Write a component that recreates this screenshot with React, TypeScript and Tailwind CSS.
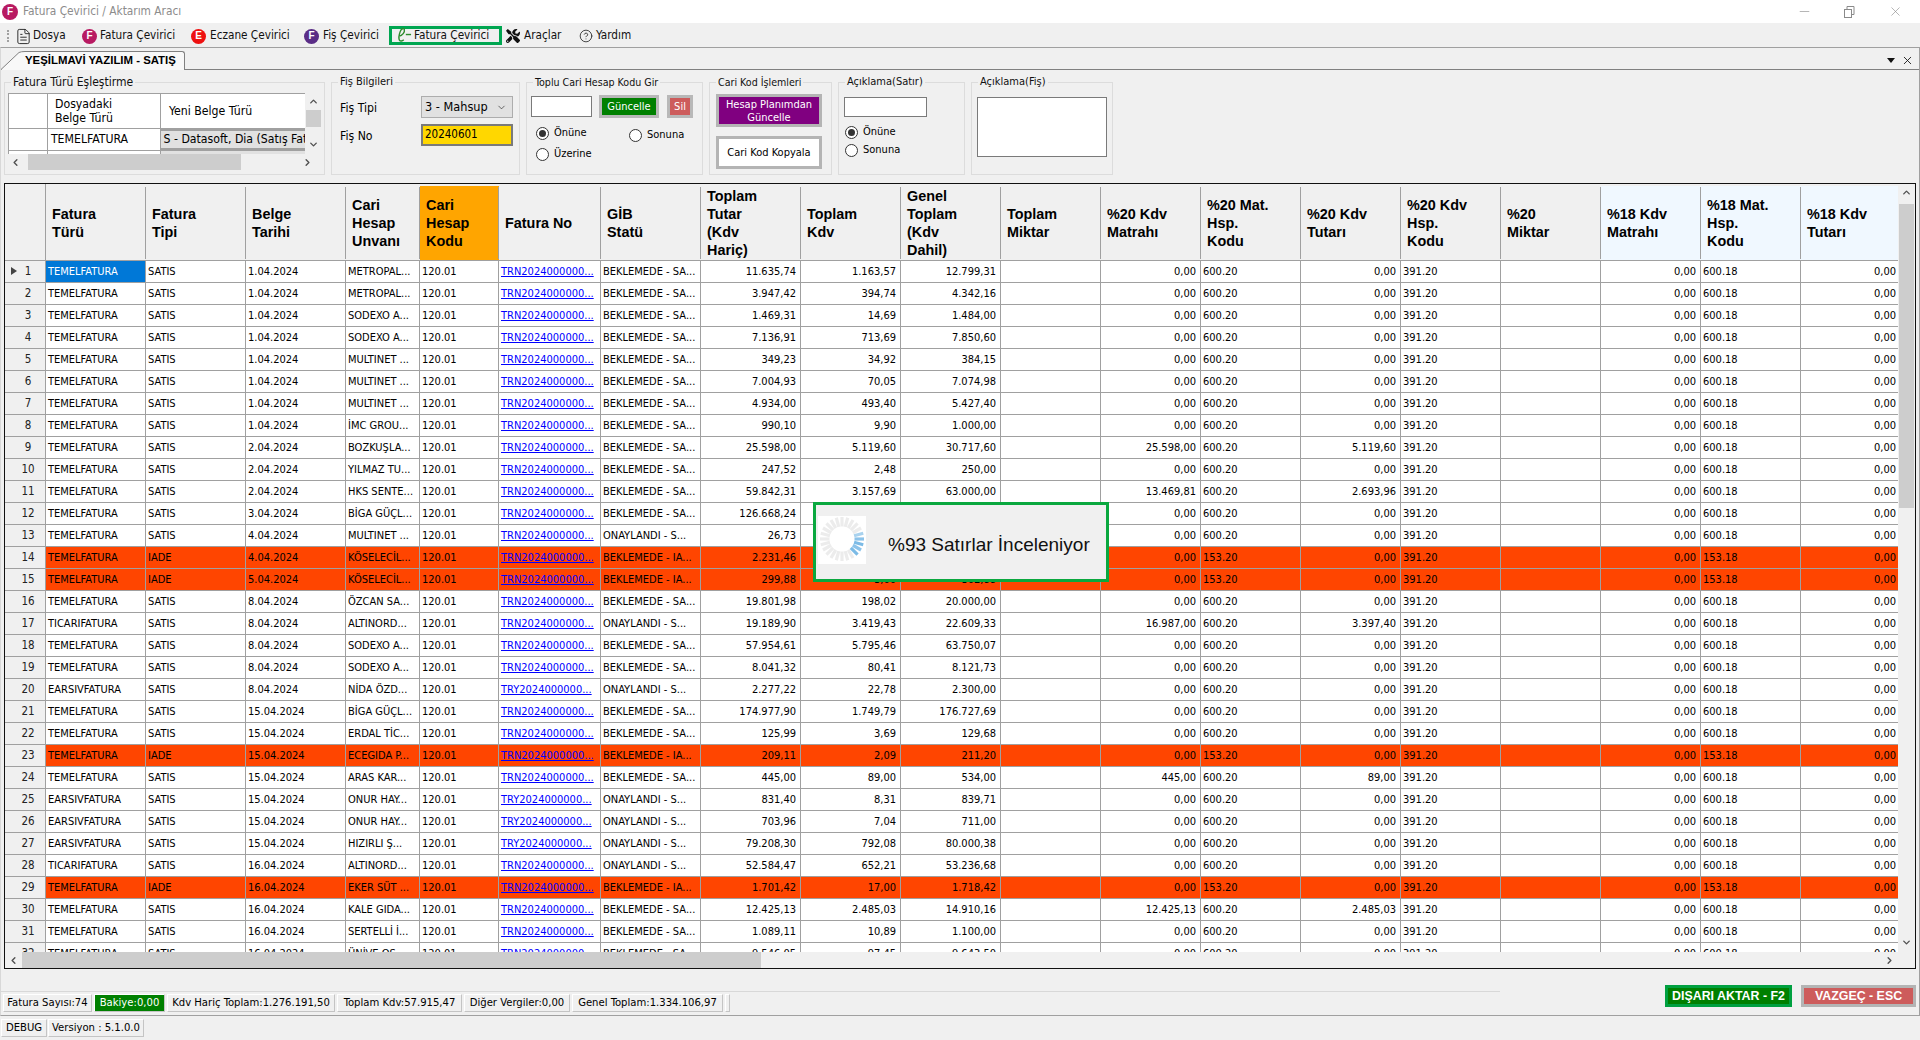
import React from "react";
import { ChevronDown, ChevronLeft, ChevronRight, ChevronUp, CircleHelp, FileText, Minus, X } from "lucide-react";
import { FaTools } from "react-icons/fa";

type Row = {
  type: string;
  tip: string;
  date: string;
  name: string;
  no: string;
  status: string;
  tutar: string;
  kdv: string;
  genel: string;
  matrah?: string;
  kdvTutar?: string;
};

const T = "TEMELFATURA";
const E = "EARSIVFATURA";
const C = "TICARIFATURA";
const TRN = "TRN2024000000...";
const TRY = "TRY2024000000...";
const BS = "BEKLEMEDE - SA...";
const BI = "BEKLEMEDE - IA...";
const ON = "ONAYLANDI - S...";

const rows: Row[] = [
  { type: T, tip: "SATIS", date: "1.04.2024", name: "METROPAL...", no: TRN, status: BS, tutar: "11.635,74", kdv: "1.163,57", genel: "12.799,31" },
  { type: T, tip: "SATIS", date: "1.04.2024", name: "METROPAL...", no: TRN, status: BS, tutar: "3.947,42", kdv: "394,74", genel: "4.342,16" },
  { type: T, tip: "SATIS", date: "1.04.2024", name: "SODEXO A...", no: TRN, status: BS, tutar: "1.469,31", kdv: "14,69", genel: "1.484,00" },
  { type: T, tip: "SATIS", date: "1.04.2024", name: "SODEXO A...", no: TRN, status: BS, tutar: "7.136,91", kdv: "713,69", genel: "7.850,60" },
  { type: T, tip: "SATIS", date: "1.04.2024", name: "MULTINET ...", no: TRN, status: BS, tutar: "349,23", kdv: "34,92", genel: "384,15" },
  { type: T, tip: "SATIS", date: "1.04.2024", name: "MULTINET ...", no: TRN, status: BS, tutar: "7.004,93", kdv: "70,05", genel: "7.074,98" },
  { type: T, tip: "SATIS", date: "1.04.2024", name: "MULTINET ...", no: TRN, status: BS, tutar: "4.934,00", kdv: "493,40", genel: "5.427,40" },
  { type: T, tip: "SATIS", date: "1.04.2024", name: "İMC GROU...", no: TRN, status: BS, tutar: "990,10", kdv: "9,90", genel: "1.000,00" },
  { type: T, tip: "SATIS", date: "2.04.2024", name: "BOZKUŞLA...", no: TRN, status: BS, tutar: "25.598,00", kdv: "5.119,60", genel: "30.717,60", matrah: "25.598,00", kdvTutar: "5.119,60" },
  { type: T, tip: "SATIS", date: "2.04.2024", name: "YILMAZ TU...", no: TRN, status: BS, tutar: "247,52", kdv: "2,48", genel: "250,00" },
  { type: T, tip: "SATIS", date: "2.04.2024", name: "HKS SENTE...", no: TRN, status: BS, tutar: "59.842,31", kdv: "3.157,69", genel: "63.000,00", matrah: "13.469,81", kdvTutar: "2.693,96" },
  { type: T, tip: "SATIS", date: "3.04.2024", name: "BİGA GÜÇL...", no: TRN, status: BS, tutar: "126.668,24", kdv: "1.266,68", genel: "127.934,92" },
  { type: T, tip: "SATIS", date: "4.04.2024", name: "MULTINET ...", no: TRN, status: ON, tutar: "26,73", kdv: "0,27", genel: "27,00" },
  { type: T, tip: "IADE", date: "4.04.2024", name: "KÖSELECİL...", no: TRN, status: BI, tutar: "2.231,46", kdv: "22,31", genel: "2.253,77" },
  { type: T, tip: "IADE", date: "5.04.2024", name: "KÖSELECİL...", no: TRN, status: BI, tutar: "299,88", kdv: "3,00", genel: "302,88" },
  { type: T, tip: "SATIS", date: "8.04.2024", name: "ÖZCAN SA...", no: TRN, status: BS, tutar: "19.801,98", kdv: "198,02", genel: "20.000,00" },
  { type: C, tip: "SATIS", date: "8.04.2024", name: "ALTINORD...", no: TRN, status: ON, tutar: "19.189,90", kdv: "3.419,43", genel: "22.609,33", matrah: "16.987,00", kdvTutar: "3.397,40" },
  { type: T, tip: "SATIS", date: "8.04.2024", name: "SODEXO A...", no: TRN, status: BS, tutar: "57.954,61", kdv: "5.795,46", genel: "63.750,07" },
  { type: T, tip: "SATIS", date: "8.04.2024", name: "SODEXO A...", no: TRN, status: BS, tutar: "8.041,32", kdv: "80,41", genel: "8.121,73" },
  { type: E, tip: "SATIS", date: "8.04.2024", name: "NİDA ÖZD...", no: TRY, status: ON, tutar: "2.277,22", kdv: "22,78", genel: "2.300,00" },
  { type: T, tip: "SATIS", date: "15.04.2024", name: "BİGA GÜÇL...", no: TRN, status: BS, tutar: "174.977,90", kdv: "1.749,79", genel: "176.727,69" },
  { type: T, tip: "SATIS", date: "15.04.2024", name: "ERDAL TİC...", no: TRN, status: BS, tutar: "125,99", kdv: "3,69", genel: "129,68" },
  { type: T, tip: "IADE", date: "15.04.2024", name: "ECEGIDA P...", no: TRN, status: BI, tutar: "209,11", kdv: "2,09", genel: "211,20" },
  { type: T, tip: "SATIS", date: "15.04.2024", name: "ARAS KAR...", no: TRN, status: BS, tutar: "445,00", kdv: "89,00", genel: "534,00", matrah: "445,00", kdvTutar: "89,00" },
  { type: E, tip: "SATIS", date: "15.04.2024", name: "ONUR HAY...", no: TRY, status: ON, tutar: "831,40", kdv: "8,31", genel: "839,71" },
  { type: E, tip: "SATIS", date: "15.04.2024", name: "ONUR HAY...", no: TRY, status: ON, tutar: "703,96", kdv: "7,04", genel: "711,00" },
  { type: E, tip: "SATIS", date: "15.04.2024", name: "HIZIRLI Ş...", no: TRY, status: ON, tutar: "79.208,30", kdv: "792,08", genel: "80.000,38" },
  { type: C, tip: "SATIS", date: "16.04.2024", name: "ALTINORD...", no: TRN, status: ON, tutar: "52.584,47", kdv: "652,21", genel: "53.236,68" },
  { type: T, tip: "IADE", date: "16.04.2024", name: "EKER SÜT ...", no: TRN, status: BI, tutar: "1.701,42", kdv: "17,00", genel: "1.718,42" },
  { type: T, tip: "SATIS", date: "16.04.2024", name: "KALE GIDA...", no: TRN, status: BS, tutar: "12.425,13", kdv: "2.485,03", genel: "14.910,16", matrah: "12.425,13", kdvTutar: "2.485,03" },
  { type: T, tip: "SATIS", date: "16.04.2024", name: "SERTELLİ İ...", no: TRN, status: BS, tutar: "1.089,11", kdv: "10,89", genel: "1.100,00" },
  { type: T, tip: "SATIS", date: "16.04.2024", name: "ÜNİVE OS...", no: TRN, status: BS, tutar: "9.546,05", kdv: "97,45", genel: "9.643,50" },
];

const columns: { w: string; lines: string[]; bg?: string }[] = [
  { w: "w-[100px]", lines: ["Fatura", "Türü"] },
  { w: "w-[100px]", lines: ["Fatura", "Tipi"] },
  { w: "w-[100px]", lines: ["Belge", "Tarihi"] },
  { w: "w-[74px]", lines: ["Cari", "Hesap", "Unvanı"] },
  { w: "w-[79px]", lines: ["Cari", "Hesap", "Kodu"], bg: "bg-[#ffa500]" },
  { w: "w-[102px]", lines: ["Fatura No"] },
  { w: "w-[100px]", lines: ["GİB", "Statü"] },
  { w: "w-[100px]", lines: ["Toplam", "Tutar", "(Kdv", "Hariç)"] },
  { w: "w-[100px]", lines: ["Toplam", "Kdv"] },
  { w: "w-[100px]", lines: ["Genel", "Toplam", "(Kdv", "Dahil)"] },
  { w: "w-[100px]", lines: ["Toplam", "Miktar"] },
  { w: "w-[100px]", lines: ["%20 Kdv", "Matrahı"] },
  { w: "w-[100px]", lines: ["%20 Mat.", "Hsp.", "Kodu"] },
  { w: "w-[100px]", lines: ["%20 Kdv", "Tutarı"] },
  { w: "w-[100px]", lines: ["%20 Kdv", "Hsp.", "Kodu"] },
  { w: "w-[100px]", lines: ["%20", "Miktar"] },
  { w: "w-[100px]", lines: ["%18 Kdv", "Matrahı"], bg: "bg-[#f0f8ff]" },
  { w: "w-[100px]", lines: ["%18 Mat.", "Hsp.", "Kodu"], bg: "bg-[#f0f8ff]" },
  { w: "w-[100px]", lines: ["%18 Kdv", "Tutarı"], bg: "bg-[#f0f8ff]" },
];

function Circle({ letter, color }: { letter: string; color: string }) {
  return (
    <span className={`flex h-[15px] w-[15px] shrink-0 items-center justify-center rounded-full font-['Liberation_Sans',Arial,sans-serif] text-[10px] font-bold leading-none text-white ${color}`}>
      {letter}
    </span>
  );
}

function Radio({ on, label }: { on?: boolean; label: string }) {
  return (
    <div className="flex h-[14px] items-center gap-[5px]">
      <span className="flex h-[13px] w-[13px] items-center justify-center rounded-full border border-[#333] bg-white">
        {on && <span className="h-[7px] w-[7px] rounded-full bg-[#333]" />}
      </span>
      <span>{label}</span>
    </div>
  );
}

function Group({ title, size, className, pad, children }: { title: string; size: string; className: string; pad: string; children: React.ReactNode }) {
  return (
    <fieldset className={`h-[100px] shrink-0 border border-[#dcdcdc] ${className}`}>
      <legend className={`ml-[6px] h-[14px] px-[2px] leading-[14px] text-[#111] ${size}`}>{title}</legend>
      <div className={pad}>{children}</div>
    </fieldset>
  );
}

function Spinner() {
  const bars = Array.from({ length: 24 }, (_, i) => i * 15);
  const colorOf = (a: number) => {
    if (a === 345) return "#a9d2ee";
    if (a === 0) return "#8cc3ea";
    if (a === 15) return "#7cbbe6";
    if (a === 30) return "#8cc3ea";
    if (a === 45) return "#7cbbe6";
    return "#ececec";
  };
  return (
    <svg viewBox="0 0 48 48" className="-mt-[4px] h-[48px] w-[48px] bg-white">
      {bars.map((a) => {
        const r = (a * Math.PI) / 180;
        return (
          <line
            key={a}
            x1={24 + 12.5 * Math.cos(r)}
            y1={23 + 12.5 * Math.sin(r)}
            x2={24 + 22 * Math.cos(r)}
            y2={23 + 22 * Math.sin(r)}
            stroke={colorOf(a)}
            strokeWidth="3.2"
          />
        );
      })}
    </svg>
  );
}

function Grid() {
  const cell = "h-[22px] overflow-hidden whitespace-nowrap border-r border-b border-[#a0a0a0] px-[2px] text-left font-normal";
  const num = "h-[22px] overflow-hidden whitespace-nowrap border-r border-b border-[#a0a0a0] pl-[2px] pr-[4px] text-right";
  return (
    <table className="w-[1896px] table-fixed border-separate border-spacing-0 text-[11px] leading-[21px] text-black">
      <colgroup>
        <col className="w-[41px]" />
        {columns.map((c, i) => (
          <col key={i} className={c.w} />
        ))}
      </colgroup>
      <thead>
        <tr>
          <th className="h-[77px] border-r border-b border-[#a0a0a0] bg-[#f0f0f0]" />
          {columns.map((c, i) => (
            <th key={i} className={`h-[77px] border-b border-t-2 border-t-[#f0f0f0] border-b-[#a0a0a0] p-0 ${c.bg ?? "bg-[#f0f0f0]"}`}>
              <div className="flex h-[72px] items-center border-r border-[#a0a0a0] pl-[6px] text-left font-['Liberation_Sans',Arial,sans-serif] text-[14.4px] font-bold leading-[18px] text-black">
                <div>
                  {c.lines.map((l) => (
                    <div key={l}>{l}</div>
                  ))}
                </div>
              </div>
            </th>
          ))}
        </tr>
      </thead>
      <tbody>
        {rows.map((r, i) => {
          const iade = r.tip === "IADE";
          const bg = iade ? "bg-[#ff4500]" : "bg-white";
          return (
            <tr key={i} className={bg}>
              <td className="relative h-[22px] border-r border-b border-[#a0a0a0] bg-[#f0f0f0] pl-[6px] text-center text-[11.5px] text-[#222]">
                {i === 0 && <span className="absolute left-[6px] top-[6px] h-0 w-0 border-y-[4.5px] border-l-[6px] border-y-transparent border-l-[#444]" />}
                {i + 1}
              </td>
              <td className={`${cell} ${i === 0 ? "bg-[#0078d7] text-white" : ""}`}>{r.type}</td>
              <td className={cell}>{r.tip}</td>
              <td className={cell}>{r.date}</td>
              <td className={cell}>{r.name}</td>
              <td className={cell}>120.01</td>
              <td className={cell}>
                <a className="text-[#0000ff] underline">{r.no}</a>
              </td>
              <td className={cell}>{r.status}</td>
              <td className={num}>{r.tutar}</td>
              <td className={num}>{r.kdv}</td>
              <td className={num}>{r.genel}</td>
              <td className={num} />
              <td className={num}>{r.matrah ?? "0,00"}</td>
              <td className={cell}>{iade ? "153.20" : "600.20"}</td>
              <td className={num}>{r.kdvTutar ?? "0,00"}</td>
              <td className={cell}>391.20</td>
              <td className={num} />
              <td className={num}>0,00</td>
              <td className={cell}>{iade ? "153.18" : "600.18"}</td>
              <td className={num}>0,00</td>
            </tr>
          );
        })}
      </tbody>
    </table>
  );
}

function Status({ text, green, w }: { text: string; green?: boolean; w: string }) {
  return (
    <div
      className={`flex h-[18px] items-center justify-center whitespace-nowrap border border-b-[#c4c4c4] border-l-white border-r-[#c4c4c4] border-t-white text-[11.2px] ${w} ${
        green ? "border-[#006400] bg-[#008000] text-white" : ""
      }`}
    >
      {text}
    </div>
  );
}

export default function App() {
  return (
    <div className="flex h-[1040px] w-[1920px] flex-col overflow-hidden bg-[#f0f0f0] font-['DejaVu_Sans_Condensed','DejaVu_Sans',sans-serif] text-[11px] text-black [font-stretch:condensed]">
      {/* title bar */}
      <div className="flex h-[23px] shrink-0 items-center bg-white pl-[2px] pr-[17px]">
        <span className="flex h-[16px] w-[16px] items-center justify-center rounded-full bg-[#b81a62] font-['Liberation_Sans',Arial,sans-serif] text-[10px] font-bold text-white">F</span>
        <span className="ml-[5px] text-[11.8px] text-[#8c8c8c]">Fatura Çevirici / Aktarım Aracı</span>
        <div className="ml-auto flex items-center text-[#8a8a8a]">
          <Minus size={15} strokeWidth={1} />
          <svg viewBox="0 0 12 12" className="ml-[31px] h-[12px] w-[12px]" fill="none" stroke="currentColor" strokeWidth="1">
            <rect x="1.5" y="3.5" width="7" height="8" />
            <path d="M4 3.5V0.5h7v8H8.5" />
          </svg>
          <X size={15} strokeWidth={1} className="ml-[33px]" />
        </div>
      </div>

      {/* menu */}
      <div className="flex h-[24px] shrink-0 items-center whitespace-nowrap pt-[2px] text-[11.7px] text-[#111]">
        <span className="ml-[7px] h-[12px] w-[9px] border-l-2 border-dotted border-[#a0a0a0]" />
        <span className="w-[17px] shrink-0"><FileText size={17} strokeWidth={1.3} className="-ml-[1px] text-[#222]" /></span>
        <span className="w-[49px] shrink-0">Dosya</span>
        <span className="w-[18px] shrink-0"><Circle letter="F" color="bg-[#b81a62]" /></span>
        <span className="w-[91px] shrink-0">Fatura Çevirici</span>
        <span className="w-[19px] shrink-0"><Circle letter="E" color="bg-[#ee1111]" /></span>
        <span className="w-[94px] shrink-0">Eczane Çevirici</span>
        <span className="w-[19px] shrink-0"><Circle letter="F" color="bg-[#5a2d86]" /></span>
        <span className="w-[66px] shrink-0">Fiş Çevirici</span>
        <div className="-mt-[2px] flex h-[19px] w-[113px] shrink-0 items-center border-[3px] border-[#00a651] pl-[5px]">
          <svg viewBox="0 0 16 16" className="h-[16px] w-[15px] shrink-0" fill="none" stroke="#2e8b2e" strokeWidth="1.5">
            <path d="M1.8 9.5C6 8.5 8.5 5 7.8 2.2 7.2.4 4.6 1 3.4 4.4 2.2 7.6 1.4 11 2.6 13.4c.9 1.6 3 1.2 4.6-.4" />
            <path d="M9.4 7.5h5.6" />
          </svg>
          <span className="ml-[2px] pt-[1px]">Fatura Çevirici</span>
        </div>
        <span className="ml-[4px] w-[18px] shrink-0"><FaTools size={14} className="text-[#111]" /></span>
        <span className="w-[55px] shrink-0">Araçlar</span>
        <span className="w-[17px] shrink-0"><CircleHelp size={14} strokeWidth={1.4} className="text-[#222]" /></span>
        <span>Yardım</span>
      </div>

      {/* tab page */}
      <div className="flex h-[969px] shrink-0 flex-col border border-[#a0a0a0] border-l-[#d8d8d8]">
        <div className="flex h-[22px] shrink-0 items-end justify-between border-b border-[#808080]">
          <div className="-mb-px flex h-[19px] items-stretch">
            <svg viewBox="0 0 24 19" className="h-[19px] w-[24px]" fill="none">
              <path d="M0 19L18 1.5Q20 0 24 0V19Z" fill="#f8f8f8" />
              <path d="M0 18.5L18 1.5Q20 0.5 24 0.5" stroke="#808080" />
            </svg>
            <div className="flex w-[160px] items-center rounded-tr-[3px] border-r border-t border-[#808080] bg-[#f8f8f8] font-['Liberation_Sans',Arial,sans-serif] text-[11.4px] font-bold">
              YEŞİLMAVİ YAZILIM - SATIŞ
            </div>
          </div>
          <div className="mb-[2px] flex items-center gap-[6px] pr-[5px]">
            <span className="h-0 w-0 border-x-[4px] border-t-[5px] border-x-transparent border-t-[#111]" />
            <X size={13} strokeWidth={1.6} className="text-[#111]" />
          </div>
        </div>

        {/* settings groups */}
        <div className="mt-[5px] flex shrink-0 items-start gap-[6px] pl-[3px]">
          <Group title="Fatura Türü Eşleştirme" size="text-[12px]" className="w-[321px]" pad="pl-[3px]">
            <div className="flex pt-[4px] text-[12.2px]">
              <div className="h-[61px] w-[297px] overflow-hidden border-l border-t border-[#a0a0a0] bg-white">
                <div className="flex h-[35px] border-b border-[#a0a0a0]">
                  <div className="w-[39px] border-r border-[#a0a0a0]" />
                  <div className="flex w-[113px] items-center border-r border-[#a0a0a0] pl-[7px] leading-[14px]">
                    Dosyadaki
                    <br />
                    Belge Türü
                  </div>
                  <div className="flex items-center pl-[8px]">Yeni Belge Türü</div>
                </div>
                <div className="flex h-[22px] border-b border-[#a0a0a0]">
                  <div className="w-[39px] border-r border-[#a0a0a0]" />
                  <div className="flex w-[113px] items-center border-r border-[#a0a0a0] pl-[3px]">TEMELFATURA</div>
                  <div className="flex w-[145px] items-center overflow-hidden whitespace-nowrap border-y-2 border-[#a0a0a0] bg-[#e1e1e1] pl-[3px]">S - Datasoft, Dia (Satış Fatura)</div>
                </div>
                <div className="flex h-[5px]">
                  <div className="w-[39px] border-r border-[#a0a0a0]" />
                  <div className="w-[113px] border-r border-[#a0a0a0]" />
                  <div className="w-[145px] bg-[#e1e1e1]" />
                </div>
              </div>
              <div className="flex h-[61px] w-[16px] flex-col items-center text-[#505050]">
                <div className="flex h-[17px] shrink-0 items-center"><ChevronUp size={11} strokeWidth={3} /></div>
                <div className="h-[17px] w-[15px] shrink-0 bg-[#cdcdcd]" />
                <ChevronDown size={11} strokeWidth={3} className="mb-[4px] mt-auto" />
              </div>
            </div>
            <div className="flex h-[16px] w-[313px] items-center justify-between bg-[#f0f0f0] text-[#505050]">
              <ChevronLeft size={11} strokeWidth={3} className="ml-[2px]" />
              <div className="h-[16px] w-[213px] bg-[#cdcdcd]" />
              <div className="w-[48px]" />
              <ChevronRight size={11} strokeWidth={3} className="mr-[8px]" />
            </div>
          </Group>

          <Group title="Fiş Bilgileri" size="text-[11px]" className="w-[189px]" pad="pl-[8px]">
            <div className="flex items-center pt-[7px]">
              <span className="w-[81px] pt-[2px] text-[12.2px]">Fiş Tipi</span>
              <div className="flex h-[22px] w-[92px] items-center justify-between border border-[#adadad] bg-[#e1e1e1] pl-[3px] pr-[5px] pt-px text-[12.6px]">
                3 - Mahsup
                <ChevronDown size={11} strokeWidth={1.2} />
              </div>
            </div>
            <div className="mt-[6px] flex items-center">
              <span className="w-[81px] pt-[2px] text-[12.2px]">Fiş No</span>
              <div className="flex h-[22px] w-[92px] items-center border-2 border-[#7a7a7a] bg-[#ffd700] pl-[2px] text-[11.5px]">20240601</div>
            </div>
          </Group>

          <Group title="Toplu Cari Hesap Kodu Gir" size="text-[10.6px]" className="w-[177px]" pad="pl-[4px]">
            <div className="flex items-start pt-[6px]">
              <div className="mt-px h-[21px] w-[61px] border border-[#7a7a7a] bg-white" />
              <div className="ml-[7px] h-[23px] w-[60px] border-[3px] border-[#b8b8b8] bg-[#008000] text-center text-[11px] leading-[17px] text-white">Güncelle</div>
              <div className="ml-[8px] h-[23px] w-[26px] border-[3px] border-[#b8b8b8] bg-[#cd5c5c] text-center leading-[17px] text-white">Sil</div>
            </div>
            <div className="flex pl-[5px] pt-[8px]">
              <div className="flex w-[93px] flex-col gap-[7px]">
                <Radio on label="Önüne" />
                <Radio label="Üzerine" />
              </div>
              <div className="pt-[2px]">
                <Radio label="Sonuna" />
              </div>
            </div>
          </Group>

          <Group title="Cari Kod İşlemleri" size="text-[10.6px]" className="w-[123px]" pad="pl-[6px]">
            <div className="pt-[5px]">
              <div className="flex h-[33px] w-[106px] items-center justify-center border-[3px] border-[#b4b4b4] bg-[#800080] text-center text-[11px] leading-[13px] text-white">
                Hesap Planımdan
                <br />
                Güncelle
              </div>
              <div className="mt-[9px] flex h-[33px] w-[106px] items-center justify-center border-[3px] border-[#b4b4b4] bg-white pt-[2px]">Cari Kod Kopyala</div>
            </div>
          </Group>

          <Group title="Açıklama(Satır)" size="text-[11px]" className="w-[127px]" pad="pl-[5px]">
            <div className="pt-[8px]">
              <div className="h-[20px] w-[83px] border border-[#7a7a7a] bg-white" />
              <div className="flex flex-col gap-[4px] pl-[1px] pt-[8px]">
                <Radio on label="Önüne" />
                <Radio label="Sonuna" />
              </div>
            </div>
          </Group>

          <Group title="Açıklama(Fiş)" size="text-[11px]" className="w-[142px]" pad="pl-[5px]">
            <div className="pt-[8px]">
              <div className="h-[60px] w-[130px] border border-[#7a7a7a] bg-white" />
            </div>
          </Group>
        </div>

        {/* invoice grid */}
        <div className="relative ml-[3px] mt-[8px] flex h-[786px] w-[1912px] shrink-0 flex-col border border-[#111]">
          <div className="flex h-[768px] shrink-0">
            <div className="h-[768px] w-[1893px] overflow-hidden bg-[#f0f0f0]">
              <Grid />
            </div>
            <div className="flex h-[768px] w-[17px] flex-col items-center bg-[#f0f0f0] text-[#505050]">
              <ChevronUp size={11} strokeWidth={3} className="mb-[6px] mt-[3px] shrink-0" />
              <div className="h-[304px] w-[15px] bg-[#cdcdcd]" />
              <ChevronDown size={11} strokeWidth={3} className="mb-[4px] mt-auto shrink-0" />
            </div>
          </div>
          <div className="flex h-[16px] items-center bg-[#f0f0f0] text-[#505050]">
            <ChevronLeft size={11} strokeWidth={3} className="ml-[3px] shrink-0" />
            <div className="ml-[3px] h-[16px] w-[739px] bg-[#cdcdcd]" />
            <ChevronRight size={11} strokeWidth={3} className="ml-auto mr-[20px] shrink-0" />
          </div>

          {/* progress popup */}
          <div className="absolute left-[808px] top-[318px] flex h-[80px] w-[296px] items-center border-[3px] border-[#0aa83f] bg-[#f0f0f0] pl-[2px] font-['Liberation_Sans',Arial,sans-serif] text-[19px] text-[#111]">
            <Spinner />
            <span className="ml-[22px] mt-[6px]">%93 Satırlar İnceleniyor</span>
          </div>
        </div>

        {/* footer */}
        <div className="flex flex-1 items-start justify-between">
          <div className="mt-[22px] flex h-[22px] w-[1499px] items-end gap-[2px] border-t border-[#d8d8d8] pb-px pl-[2px]">
            <Status text="Fatura Sayısı:74" w="w-[89px]" />
            <Status text="Bakiye:0,00" green w="w-[71px]" />
            <Status text="Kdv Hariç Toplam:1.276.191,50" w="w-[168px]" />
            <Status text="Toplam Kdv:57.915,47" w="w-[125px]" />
            <Status text="Diğer Vergiler:0,00" w="w-[106px]" />
            <Status text="Genel Toplam:1.334.106,97" w="w-[151px]" />
            <Status text="" w="w-[5px]" />
          </div>
          <div className="mr-[3px] mt-[16px] flex gap-[9px] font-['Liberation_Sans',Arial,sans-serif] text-[12.4px] font-bold text-white">
            <div className="flex h-[22px] w-[127px] items-center justify-center border-[3px] border-[#00a040] bg-[#008000]">DIŞARI AKTAR - F2</div>
            <div className="flex h-[22px] w-[115px] items-center justify-center border-[3px] border-[#b4b4b4] bg-[#cd5c5c]">VAZGEÇ - ESC</div>
          </div>
        </div>
      </div>

      {/* bottom strip */}
      <div className="flex flex-1 items-start gap-px pl-px pt-[3px] text-[11.2px]">
        <Status text="DEBUG" w="w-[46px]" />
        <Status text="Versiyon : 5.1.0.0" w="w-[96px]" />
      </div>
    </div>
  );
}
